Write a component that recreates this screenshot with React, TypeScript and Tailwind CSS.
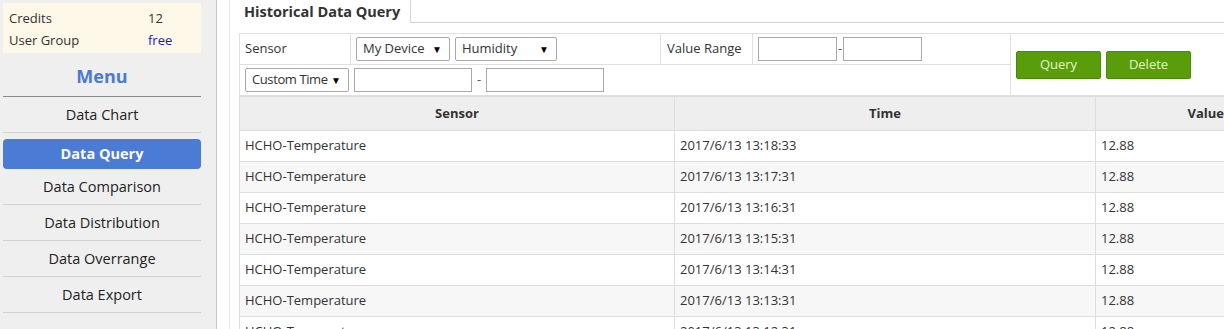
import React from 'react';

const menu = ['Data Chart', 'Data Query', 'Data Comparison', 'Data Distribution', 'Data Overrange', 'Data Export'];

const rows = [
  '2017/6/13 13:18:33',
  '2017/6/13 13:17:31',
  '2017/6/13 13:16:31',
  '2017/6/13 13:15:31',
  '2017/6/13 13:14:31',
  '2017/6/13 13:13:31',
  '2017/6/13 13:12:31',
];

function Select({ label, width, tight }: { label: string; width: string; tight?: boolean }) {
  return (
    <div className={`${width} h-[24px] border border-[#a9a9a9] rounded-[2px] bg-white flex items-center justify-between pl-[6px] pr-[7px] text-[13px] text-[#333] whitespace-nowrap`}>
      <span className={tight ? 'tracking-[-0.4px]' : ''}>{label}</span>
      <span className="text-[10px] text-black">▼</span>
    </div>
  );
}

function Input({ width }: { width: string }) {
  return <div className={`${width} h-[24px] border border-[#a9a9a9] bg-white`} />;
}

export default function App() {
  return (
    <div className="flex w-[1224px] h-[329px] overflow-hidden bg-white text-[#333]" style={{ fontFamily: '"Open Sans", "Noto Sans", sans-serif' }}>
      {/* Sidebar */}
      <aside className="w-[217px] shrink-0 bg-[#efefef] border-r border-[#c8c8c8] pl-[3px] pr-[15px] pt-[3px]">
        <div className="bg-[#fdf8e7] px-[6px] pt-[4px] pb-[2px] text-[13px] leading-[22px]">
          <div className="flex"><span className="w-[139px]">Credits</span><span>12</span></div>
          <div className="flex"><span className="w-[139px]">User Group</span><span className="text-[#1c1ca8]">free</span></div>
        </div>
        <div className="text-center text-[18px] font-bold text-[#4a7bd0] leading-[40px] pt-[3px] border-b border-[#8a8a8a]">Menu</div>
        <nav className="text-[14.5px] text-[#222]">
          {menu.map((m) =>
            m === 'Data Query' ? (
              <div key={m} className="h-[36px] pt-[6px]">
                <div className="h-[30px] rounded-[4px] bg-[#4a7bd5] text-white font-bold flex items-center justify-center">{m}</div>
              </div>
            ) : (
              <div key={m} className="h-[36px] flex items-center justify-center border-b border-[#d2d2d2]">{m}</div>
            )
          )}
        </nav>
      </aside>

      {/* Main */}
      <main className="ml-[12px] border-l border-[#e4e4e4] pl-[9px] flex-1 min-w-0">
        <div className="w-[1060px]">
          <div className="flex h-[23px]">
            <div className="px-[5px] border-r border-[#d4d4d4] text-[14.5px] font-bold text-[#333] leading-[24px] w-[172px]">Historical Data Query</div>
            <div className="flex-1 border-b border-[#d4d4d4]" />
          </div>

          {/* Filter */}
          <table className="mt-[10px] w-full border-collapse text-[13px]">
            <tbody>
              <tr className="h-[31px]">
                <td className="border border-[#e0e0e0] w-[111px] px-[5px]">Sensor</td>
                <td className="border border-[#e0e0e0] w-[310px] px-[5px]">
                  <div className="flex gap-[5px]">
                    <Select label="My Device" width="w-[94px]" />
                    <Select label="Humidity" width="w-[102px]" />
                  </div>
                </td>
                <td className="border border-[#e0e0e0] w-[92px] px-[6px]">Value Range</td>
                <td className="border border-[#e0e0e0] w-[258px] px-[5px]">
                  <div className="flex items-center gap-[1px]">
                    <Input width="w-[79px]" />
                    <span className="text-[#555]">-</span>
                    <Input width="w-[79px]" />
                  </div>
                </td>
                <td rowSpan={2} className="border border-[#e0e0e0] px-[5px]">
                  <div className="flex gap-[5px]">
                    <button className="w-[85px] h-[28px] bg-[#599e0a] border border-[#4a8808] rounded-[2px] text-[#e6f5cf] text-[13px]">Query</button>
                    <button className="w-[85px] h-[28px] bg-[#599e0a] border border-[#4a8808] rounded-[2px] text-[#e6f5cf] text-[13px]">Delete</button>
                  </div>
                </td>
              </tr>
              <tr className="h-[31px]">
                <td colSpan={4} className="border border-[#e0e0e0] px-[5px]">
                  <div className="flex items-center gap-[5px]">
                    <Select label="Custom Time" width="w-[104px]" tight />
                    <Input width="w-[118px]" />
                    <span className="text-[#555]">-</span>
                    <Input width="w-[118px]" />
                  </div>
                </td>
              </tr>
            </tbody>
          </table>

          {/* Data */}
          <table className="w-full border-collapse text-[13px]">
            <thead>
              <tr className="h-[34px] bg-[#eeeeee]">
                <th className="border border-[#dddddd] w-[435px] font-bold text-[#333]">Sensor</th>
                <th className="border border-[#dddddd] w-[421px] font-bold text-[#333]">Time</th>
                <th className="border border-[#dddddd] text-right pr-[74px] font-bold text-[#333]">Value</th>
              </tr>
            </thead>
            <tbody>
              {rows.map((t, i) => (
                <tr key={t} className={`h-[31px] ${i % 2 === 1 ? 'bg-[#f7f7f7]' : 'bg-white'}`}>
                  <td className="border border-[#dddddd] px-[5px]">HCHO-Temperature</td>
                  <td className="border border-[#dddddd] px-[5px]">{t}</td>
                  <td className="border border-[#dddddd] px-[5px]">12.88</td>
                </tr>
              ))}
            </tbody>
          </table>
        </div>
      </main>
    </div>
  );
}
